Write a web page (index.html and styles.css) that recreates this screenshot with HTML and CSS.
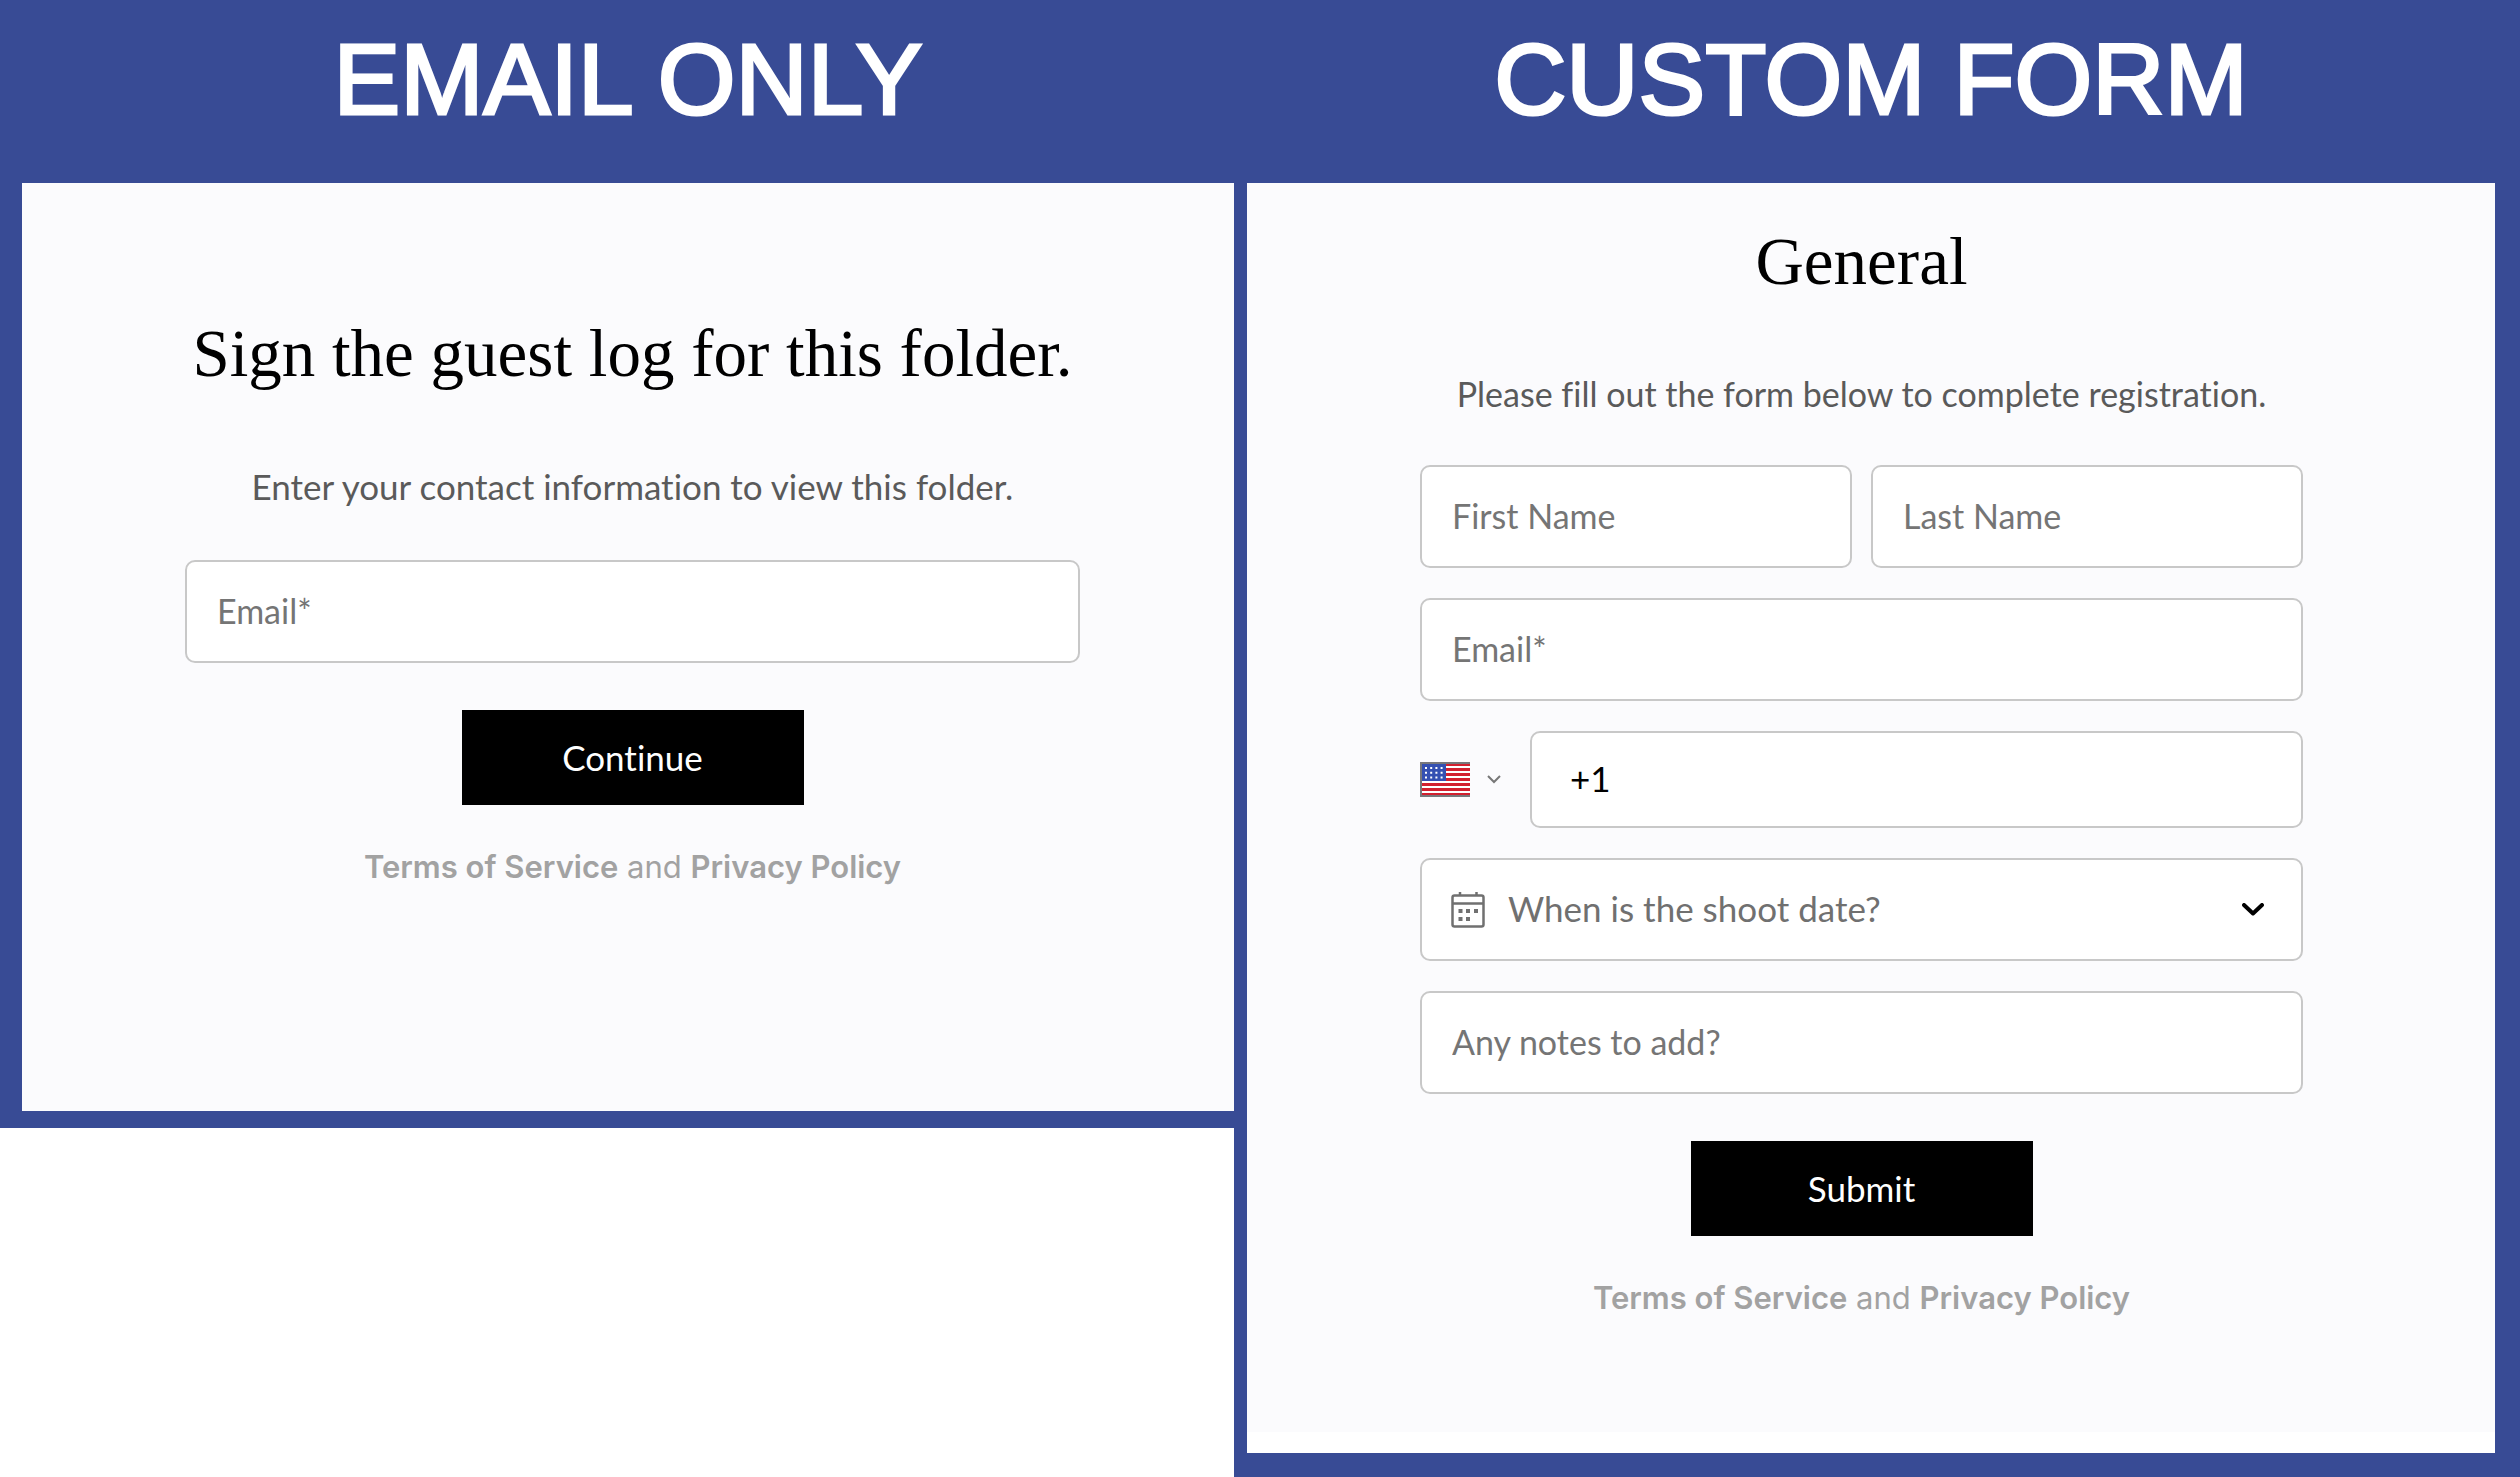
FILE: index.html
```html
<!DOCTYPE html>
<html lang="en">
<head>
<meta charset="utf-8">
<meta name="viewport" content="width=device-width, initial-scale=1">
<title>Guest log forms</title>
<link rel="stylesheet" href="styles.css">
</head>
<body>
<main class="compare">
  <section class="panel panel-email">
    <h1 class="banner">EMAIL ONLY</h1>
    <form class="card">
      <h2 class="title">Sign the guest log for this folder.</h2>
      <p class="intro">Enter your contact information to view this folder.</p>
      <input class="field" type="email" placeholder="Email*" aria-label="Email">
      <button class="action" type="button">Continue</button>
      <p class="legal"><a href="#terms">Terms of Service</a> and <a href="#privacy">Privacy Policy</a></p>
    </form>
  </section>

  <section class="panel panel-custom">
    <h1 class="banner">CUSTOM FORM</h1>
    <form class="card">
      <h2 class="title">General</h2>
      <p class="intro">Please fill out the form below to complete registration.</p>
      <div class="fields">
        <div class="names">
          <input class="field" type="text" placeholder="First Name" aria-label="First name">
          <input class="field" type="text" placeholder="Last Name" aria-label="Last name">
        </div>
        <input class="field" type="email" placeholder="Email*" aria-label="Email">
        <div class="phone">
          <button class="country" type="button" aria-label="Country: United States">
            <svg class="flag" viewBox="0 0 50 35" aria-hidden="true">
              <rect width="50" height="35" fill="#fff"/>
              <path fill="#d2202f" d="M2 1h48v3H2zM2 6h48v3H2zM2 11h48v3H2zM2 16h48v3H2zM2 21h48v3H2zM2 26h48v3H2zM2 31h48v3H2z"/>
              <rect x="2" y="1" width="24" height="18" fill="#3450b2"/>
              <path stroke="#fff" stroke-width="2" stroke-dasharray="2 3.2" d="M5 6h19M5 10.700h19M5 15.400h19"/>
              <path fill="none" stroke="#77777b" stroke-width="2" d="M50 1H1v33h49"/>
            </svg>
            <svg class="caret" viewBox="0 0 14 9" aria-hidden="true"><path fill="none" stroke="#777" stroke-width="2" d="M1 1l6 6 6-6"/></svg>
          </button>
          <input class="field phone-number" type="tel" value="+1" aria-label="Phone number">
        </div>
        <div class="date">
          <select class="field date-select" aria-label="When is the shoot date?">
            <option>When is the shoot date?</option>
          </select>
          <svg class="calendar" viewBox="0 0 34 36" aria-hidden="true">
            <rect x="1.500" y="3.500" width="31" height="31" rx="2" fill="none" stroke="#707070" stroke-width="2.500"/>
            <path stroke="#707070" stroke-width="2.500" d="M1 11.500h32M9 0v4M25.500 0v4"/>
            <path fill="#707070" d="M7.500 17h4v4h-4zM15 17h4v4h-4zM23 17h4v4h-4zM7.500 25h4v4h-4zM15 25h4v4h-4z"/>
          </svg>
          <svg class="chevron" viewBox="0 0 22 14" aria-hidden="true"><path fill="none" stroke="#000" stroke-width="4" stroke-linecap="round" stroke-linejoin="round" d="M2 2l9 8.500L20 2"/></svg>
        </div>
        <input class="field" type="text" placeholder="Any notes to add?" aria-label="Any notes to add?">
      </div>
      <button class="action" type="button">Submit</button>
      <p class="legal"><a href="#terms">Terms of Service</a> and <a href="#privacy">Privacy Policy</a></p>
    </form>
  </section>
</main>
</body>
</html>
```
FILE: styles.css
```css
* {
  box-sizing: border-box;
}

body {
  margin: 0;
  background: #fff;
  color: #000;
  font-family: Lato, sans-serif;
}

.compare {
  display: grid;
  grid-template-columns: minmax(0, 1234fr) minmax(0, 1286fr);
  align-items: start;
}

.panel {
  background: #384b95;
}

.panel-email {
  padding: 0 0 17px 22px;
}

.panel-custom {
  padding: 0 25px 24px 13px;
}

.banner {
  margin: 0;
  padding: 23px 0 48px;
  color: #fff;
  font: 400 100px/112px "Liberation Sans", Arial, sans-serif;
  text-align: center;
  -webkit-text-stroke: 3px #fff;
}

.card {
  display: flex;
  flex-direction: column;
  align-items: center;
  background: #fbfbfd;
}

.panel-email .card {
  padding: 130px 154px 220px 163px;
}

.panel-custom .card {
  padding: 38px 192px 110px 173px;
  border-bottom: 21px solid #fff;
}

.title {
  margin: 0;
  font: 400 67px/80px "Liberation Serif", serif;
  white-space: nowrap;
}

.intro {
  margin: 69px 0 50px;
  color: #5a5a5a;
  font-size: 35px;
  line-height: 48px;
  font-variant-ligatures: none;
  white-space: nowrap;
}

.panel-custom .intro {
  margin-bottom: 47px;
  font-size: 34px;
}

.fields {
  display: grid;
  gap: 30px;
  width: 100%;
}

.names {
  display: grid;
  grid-template-columns: 1fr 1fr;
  gap: 19px;
}

.field {
  display: block;
  width: 100%;
  min-width: 0;
  height: 103px;
  margin: 0;
  padding: 0 30px 3px;
  border: 2px solid #c8c8c8;
  border-radius: 10px;
  background: #fff;
  color: #000;
  font: 400 34px/40px Lato, sans-serif;
}

.field::placeholder {
  color: #757575;
  opacity: 1;
}

.phone {
  display: grid;
  grid-template-columns: 110px 1fr;
}

.country {
  display: flex;
  align-items: center;
  gap: 17px;
  padding: 0;
  border: 0;
  background: none;
}

.flag {
  width: 50px;
  height: 35px;
}

.caret {
  width: 14px;
  height: 9px;
}

.phone-number {
  height: 97px;
  padding: 0 38px 3px;
  font-size: 35px;
}

.date {
  position: relative;
}

.date-select {
  padding: 0 80px 3px 86px;
  color: #707070;
  font-size: 35px;
  appearance: none;
}

.calendar,
.chevron {
  position: absolute;
  top: 0;
  bottom: 0;
  margin: auto;
  pointer-events: none;
}

.calendar {
  left: 31px;
  width: 34px;
  height: 36px;
}

.chevron {
  right: 39px;
  width: 22px;
  height: 14px;
}

.action {
  width: 342px;
  height: 95px;
  margin: 47px 0 38px;
  padding: 0 0 2px;
  border: 0;
  background: #000;
  color: #fff;
  font: 400 35px/44px Lato, sans-serif;
  font-variant-ligatures: none;
}

.legal {
  margin: 0;
  color: #a2a2a2;
  font: 400 31px/48px Inter, sans-serif;
  white-space: nowrap;
}

.legal a {
  color: inherit;
  font-weight: 600;
  text-decoration: none;
}
```
